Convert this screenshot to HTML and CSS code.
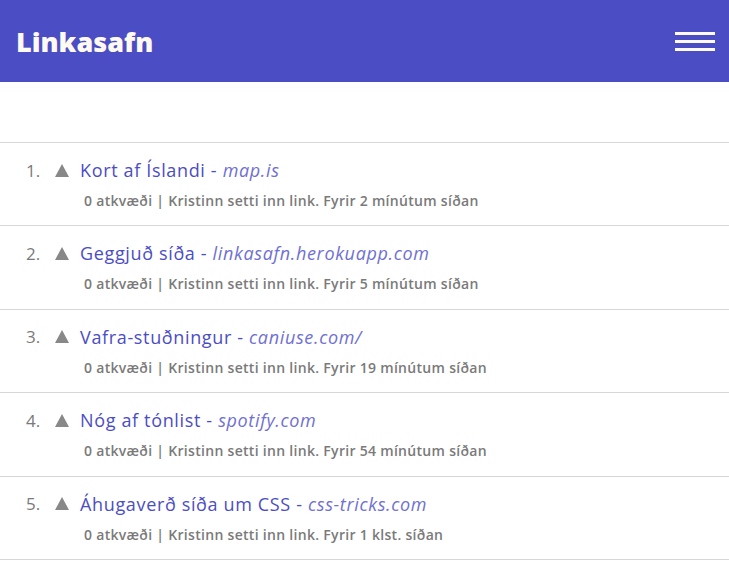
FILE: index.html
```html
<!DOCTYPE html>
<html lang="is">
<head>
<meta charset="utf-8">
<title>Linkasafn</title>
<link rel="stylesheet" href="styles.css">
</head>
<body>
<header class="topbar">
  <h1 class="brand">Linkasafn</h1>
  <button class="menu" aria-label="Valmynd"><span></span><span></span><span></span></button>
</header>
<main class="content">
  <ol class="links">
    <li class="item">
      <div class="line"><span class="num">1.</span><svg class="vote" viewBox="0 0 14 13"><polygon points="7,0 14,13 0,13"/></svg><a class="title" href="#">Kort af Íslandi - <em class="url">map.is</em></a></div>
      <div class="meta">0 atkvæði | Kristinn setti inn link. Fyrir 2 mínútum síðan</div>
    </li>
    <li class="item">
      <div class="line"><span class="num">2.</span><svg class="vote" viewBox="0 0 14 13"><polygon points="7,0 14,13 0,13"/></svg><a class="title" href="#">Geggjuð síða - <em class="url">linkasafn.herokuapp.com</em></a></div>
      <div class="meta">0 atkvæði | Kristinn setti inn link. Fyrir 5 mínútum síðan</div>
    </li>
    <li class="item">
      <div class="line"><span class="num">3.</span><svg class="vote" viewBox="0 0 14 13"><polygon points="7,0 14,13 0,13"/></svg><a class="title" href="#">Vafra-stuðningur - <em class="url">caniuse.com/</em></a></div>
      <div class="meta">0 atkvæði | Kristinn setti inn link. Fyrir 19 mínútum síðan</div>
    </li>
    <li class="item">
      <div class="line"><span class="num">4.</span><svg class="vote" viewBox="0 0 14 13"><polygon points="7,0 14,13 0,13"/></svg><a class="title" href="#">Nóg af tónlist - <em class="url">spotify.com</em></a></div>
      <div class="meta">0 atkvæði | Kristinn setti inn link. Fyrir 54 mínútum síðan</div>
    </li>
    <li class="item">
      <div class="line"><span class="num">5.</span><svg class="vote" viewBox="0 0 14 13"><polygon points="7,0 14,13 0,13"/></svg><a class="title" href="#">Áhugaverð síða um CSS - <em class="url">css-tricks.com</em></a></div>
      <div class="meta">0 atkvæði | Kristinn setti inn link. Fyrir 1 klst. síðan</div>
    </li>
  </ol>
</main>
</body>
</html>
```

FILE: styles.css
```css
* { box-sizing: border-box; }
html, body { margin: 0; padding: 0; background: #fff; }
body { font-family: "Open Sans", "Noto Sans", sans-serif; }

.topbar {
  height: 82px;
  background: #4b4dc4;
  display: flex;
  align-items: center;
  justify-content: space-between;
  padding: 0 14px 0 16px;
}
.brand {
  margin: 0;
  color: #fffaf0;
  font-size: 27px;
  font-weight: 800;
  letter-spacing: 0;
}
.menu {
  width: 40px;
  height: 19px;
  padding: 0;
  border: 0;
  background: transparent;
  display: flex;
  flex-direction: column;
  justify-content: space-between;
}
.menu span { display: block; height: 3px; background: #fffaf0; }

.content { padding-top: 60px; }
.links {
  list-style: none;
  margin: 0;
  padding: 0;
  border-top: 1px solid #d6d6d6;
}
.item {
  height: 83.4px;
  border-bottom: 1px solid #d6d6d6;
  padding: 15px 0 0 26px;
}
.line { display: flex; align-items: center; height: 24px; }
.num { width: 29px; color: #7a7a7a; font-size: 17px; }
.vote { width: 14px; height: 13px; fill: #888; margin-right: 11px; }
.title { color: #4b4dc4; text-decoration: none; font-size: 18px; letter-spacing: 0.65px; }
.url { color: #7070d2; }
.meta {
  margin: 9px 0 0 58px;
  color: #7a7a7a;
  font-size: 14px;
  font-weight: 600;
  letter-spacing: 0.3px;
}
```
